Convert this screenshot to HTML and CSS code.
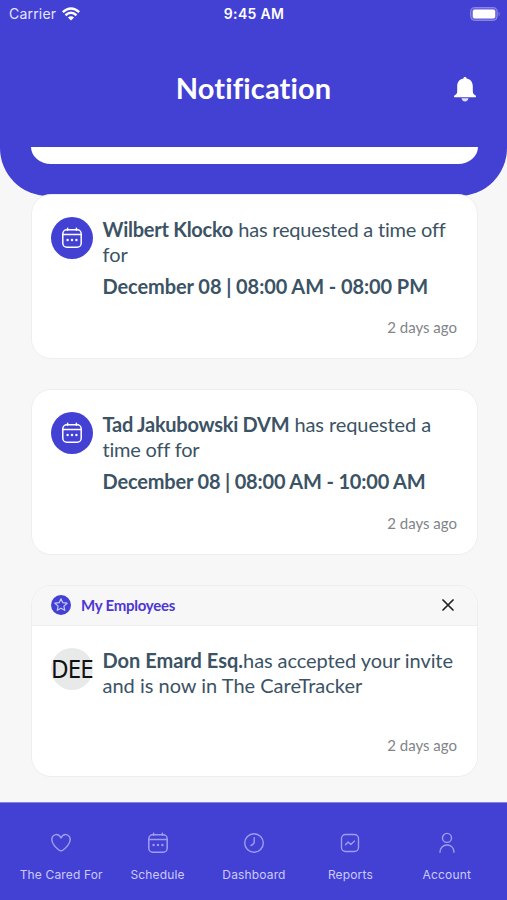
FILE: index.html
```html
<!DOCTYPE html>
<html lang="en">
<head>
<meta charset="utf-8">
<title>Notification</title>
<link rel="stylesheet" href="styles.css">
</head>
<body>
<svg class="defs" width="0" height="0" aria-hidden="true">
  <symbol id="calendar" viewBox="0 0 22 22">
    <g fill="none" stroke="currentColor" stroke-width="1.5" stroke-linecap="round">
      <rect x="1.800" y="2.800" width="18.400" height="17.400" rx="4"/>
      <path d="M2 7.600h18M6.600 1.200v2M15.400 1.200v2"/>
    </g>
    <g fill="currentColor" stroke="none"><circle cx="6.600" cy="13" r="1.200"/><circle cx="11" cy="13" r="1.200"/><circle cx="15.400" cy="13" r="1.200"/></g>
  </symbol>
</svg>
<div class="app">
  <div class="hero"></div>
  <header class="header">
    <div class="status">
      <div class="carrier"><span>Carrier</span>
        <svg width="18" height="14" viewBox="0 0 18 14" fill="none" stroke="#fff" stroke-width="2.500"><path d="M.8 5.100Q9-2.100 17.200 5.100M3.500 8.200Q9 3.300 14.500 8.200"/><path d="M5.900 10.400Q9 7.900 12.100 10.400L9 13.600z" fill="#fff" stroke="none"/></svg>
      </div>
      <div class="clock">9:45 AM</div>
      <svg class="battery" width="31" height="14" viewBox="0 0 31 14"><rect x=".6" y=".6" width="26.600" height="12.800" rx="4" fill="#6963dc" stroke="#8f8be6"/><rect x="2.800" y="2.500" width="22.400" height="9" rx="2" fill="#fff"/><path d="M28.600 4.800q2 2.200 0 4.400z" fill="#8f8be6"/></svg>
    </div>
    <div class="titlebar">
      <h1>Notification</h1>
      <svg class="bell" width="22" height="25" viewBox="0 0 22 25" fill="#fff"><path d="M11 0c1 0 1.600.7 1.600 1.600 4.300.8 6.200 4 6.200 8v4.600c0 2 .8 3 2.500 4.100 1.200.800.900 2-.300 2H1c-1.200 0-1.500-1.200-.300-2 1.700-1.100 2.500-2.100 2.500-4.100V9.600c0-4 1.900-7.200 6.200-8C9.400.7 10 0 11 0z"/><path d="M7.500 21.300h7c-.3 2-1.600 3.200-3.500 3.200s-3.200-1.200-3.500-3.200z" fill="#dedcff"/></svg>
    </div>
  </header>
  <main class="list">
    <article class="card stub"></article>
    <article class="card">
      <div class="entry">
        <div class="avatar"><svg width="22" height="22"><use href="#calendar"/></svg></div>
        <div class="copy">
          <p><span class="line"><b class="tight">Wilbert Klocko</b> <span class="snug">has requested a time off</span></span><span class="line">for</span></p>
          <p class="when">December 08 | 08:00 AM - 08:00 PM</p>
        </div>
      </div>
      <time>2 days ago</time>
    </article>
    <article class="card">
      <div class="entry">
        <div class="avatar"><svg width="22" height="22"><use href="#calendar"/></svg></div>
        <div class="copy">
          <p><span class="line"><b class="tight">Tad Jakubowski DVM</b> <span class="trim">has requested a</span></span><span class="line snug">time off for</span></p>
          <p class="when snug">December 08 | 08:00 AM - 10:00 AM</p>
        </div>
      </div>
      <time>2 days ago</time>
    </article>
    <article class="card invite">
      <div class="group">
        <svg width="20" height="20" viewBox="0 0 20 20"><circle cx="10" cy="10" r="10" fill="#4340d4"/><path d="M10 3.800l1.800 3.900 4.300.5-3.200 2.900.9 4.200-3.800-2.100-3.800 2.100.9-4.200-3.200-2.900 4.300-.5z" fill="none" stroke="#c9c7f5" stroke-width="1.200" stroke-linejoin="round"/></svg>
        <span class="name">My Employees</span>
        <svg class="close" width="12" height="12" viewBox="0 0 12 12"><path d="M1 1l10 10M11 1L1 11" stroke="#222" stroke-width="1.700" stroke-linecap="round"/></svg>
      </div>
      <div class="entry">
        <div class="avatar initials"><span>DEE</span></div>
        <div class="copy">
          <p><span class="line"><b>Don Emard Esq.</b><span class="trim">has accepted your invite</span></span><span class="line">and is now in The CareTracker</span></p>
        </div>
      </div>
      <time>2 days ago</time>
    </article>
  </main>
  <nav class="tabs">
    <a><svg width="22" height="22" viewBox="0 0 22 22"><path d="M11 6C9.700 3.200 7.700 2.300 5.600 2.600 2.600 3.200 1.300 5.900 2 8.900c.7 3.300 3.100 6.300 6.900 9.100 1.500 1.100 2.700 1.100 4.200 0 3.800-2.800 6.200-5.800 6.900-9.100.7-3-.6-5.700-3.600-6.300C14.300 2.300 12.300 3.200 11 6z"/></svg><span>The Cared For</span></a>
    <a><svg width="22" height="22"><use href="#calendar"/></svg><span>Schedule</span></a>
    <a><svg width="22" height="22" viewBox="0 0 22 22"><circle cx="11" cy="11" r="9.300"/><path d="M11.200 5.700v4.600c0 1.200-.7 2-3.200 3.200"/></svg><span>Dashboard</span></a>
    <a><svg width="22" height="22" viewBox="0 0 22 22"><rect x="2.500" y="2.500" width="17" height="17" rx="4"/><path d="M6.500 12.800l2.600-2.800 2.700 2.500 3.700-3.400"/></svg><span>Reports</span></a>
    <a><svg width="22" height="22" viewBox="0 0 22 22"><circle cx="11" cy="5.900" r="4.500"/><path d="M4 20.300c0-4.500 3-7.300 7-7.300s7 2.800 7 7.300"/></svg><span>Account</span></a>
  </nav>
</div>
</body>
</html>
```
FILE: styles.css
```css
* { box-sizing: border-box; }
body { margin: 0; background: #f7f7f7; font-family: Lato, sans-serif; font-variant-ligatures: none; }
p, h1 { margin: 0; }
.defs { position: absolute; }
.app { position: relative; width: 507px; height: 900px; display: flex; flex-direction: column; overflow: hidden; }
.hero { position: absolute; inset: 0 0 auto; height: 196px; background: #4340d4; border-radius: 0 0 48px 48px; }
.header { position: relative; flex: none; height: 147px; color: #fff; }
.status { display: grid; grid-template-columns: 1fr auto 1fr; align-items: center; height: 27px; padding: 0 6px 0 9px; font-family: Inter, sans-serif; }
.carrier { display: flex; gap: 6px; align-items: center; font-size: 14px; letter-spacing: .2px; color: #e6e5fb; }
.clock { font-size: 14px; font-weight: 600; letter-spacing: .3px; margin-left: -2px; }
.battery { justify-self: end; }
.titlebar { display: grid; grid-template-columns: 1fr auto 1fr; align-items: center; height: 124px; padding: 0 31px; }
.titlebar h1 { grid-column: 2; font-size: 29px; font-weight: 700; line-height: 36px; letter-spacing: .15px; white-space: nowrap; transform: translateY(-1px); }
.bell { justify-self: end; }
.list { position: relative; flex: 1; min-height: 0; overflow: hidden; padding: 0 29px 0 31px; display: flex; flex-direction: column; gap: 30px; }
.card { flex: none; height: 165.5px; background: #fff; border: 1px solid #eee; border-radius: 20px; overflow: hidden; display: flex; flex-direction: column; }
.card.stub { height: 16.5px; border: 0; border-radius: 0 0 20px 20px / 0 0 17px 17px; }
.card.invite { height: 192.5px; }
.entry { display: flex; gap: 10px; padding: 22px 0 0 19px; }
.avatar { flex: none; width: 42px; height: 42px; border-radius: 50%; background: #4340d4; color: #fff; display: flex; align-items: center; justify-content: center; }
.initials { background: #e8eaea; color: #111; font: 26px/42px "Noto Sans", sans-serif; justify-content: flex-start; }
.initials span { letter-spacing: -1px; transform: translateY(-1px) scaleX(.93); transform-origin: left; }
.copy { margin-left: -.5px; color: #3b5365; font-size: 20px; line-height: 25px; white-space: nowrap; }
.line { display: block; }
.tight { letter-spacing: -.26px; }
.snug { letter-spacing: -.2px; }
.trim { letter-spacing: -.08px; }
.when { font-weight: 700; margin-top: 7px; letter-spacing: -.08px; }
.when.snug { letter-spacing: -.18px; }
time { margin: auto 20px 21px; text-align: right; font-size: 15px; line-height: 20px; color: #7f8588; }
.group { flex: none; height: 40px; display: flex; align-items: center; padding: 0 23px 0 19px; background: #f7f7f7; border-bottom: 1px solid #eee; }
.name { margin-left: 10px; color: #4d36d2; font-size: 15px; font-weight: 700; letter-spacing: -.25px; line-height: 18px; }
.close { margin-left: auto; }
.tabs { position: relative; flex: none; height: 98px; padding: 29px 12px 0 13px; background: #4340d4; border-top: 1px solid #8582e2; display: grid; grid-template-columns: repeat(5, 1fr); }
.tabs a { display: flex; flex-direction: column; align-items: center; gap: 12px; color: #a09df0; font: 12px/18px Inter, sans-serif; letter-spacing: .15px; white-space: nowrap; }
.tabs svg { fill: none; stroke: #a09df0; stroke-width: 1.4; stroke-linecap: round; stroke-linejoin: round; }
.tabs span { color: #cccaf8; }
```
